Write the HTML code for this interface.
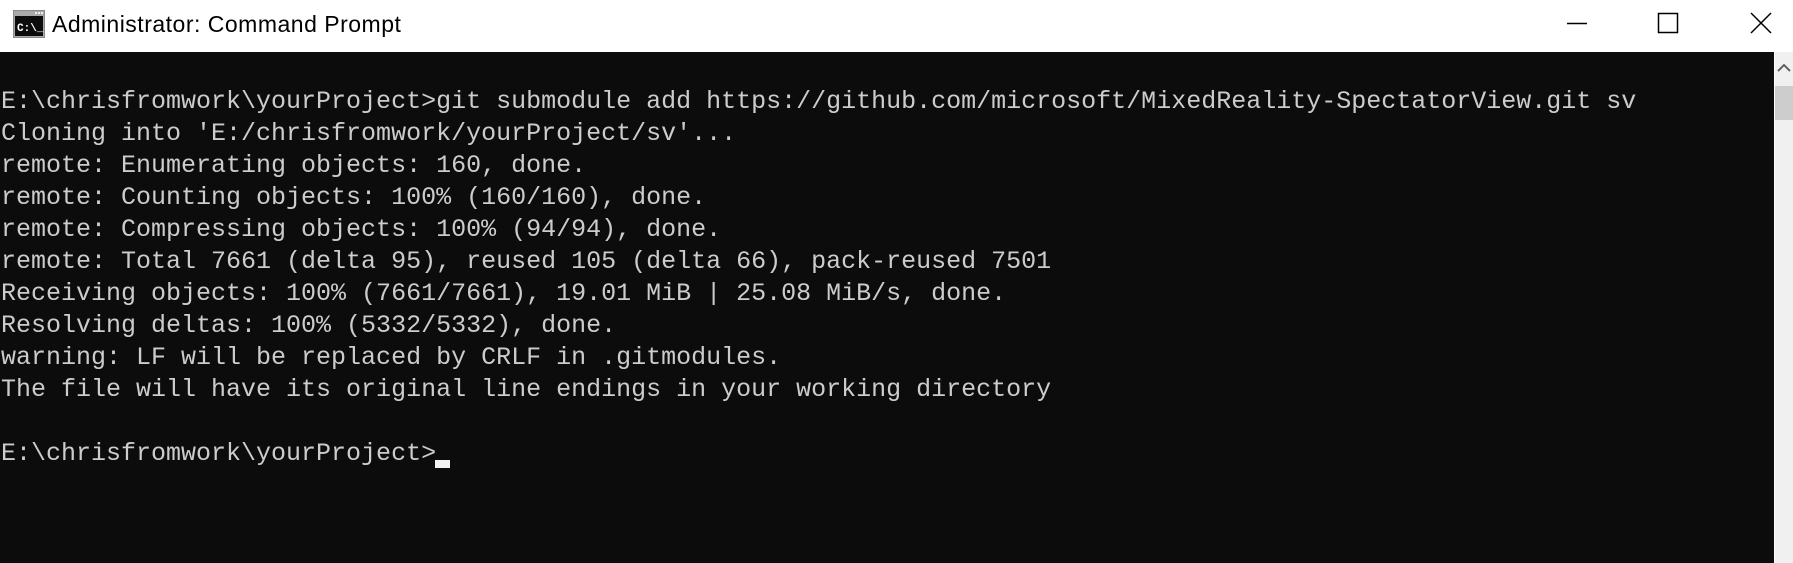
<!DOCTYPE html>
<html><head><meta charset="utf-8"><style>
html,body{margin:0;padding:0;width:1793px;height:563px;overflow:hidden;background:#fff}
#title{position:absolute;left:0;top:0;width:1793px;height:52px;background:#fff}
#title .t{position:absolute;left:52px;top:10px;font:23px "Liberation Sans",sans-serif;color:#000;line-height:28px;letter-spacing:0.5px}
#term{position:absolute;left:0;top:52px;width:1774px;height:511px;background:#0c0c0c}
pre{margin:0;position:absolute;left:1px;top:34px;font:25px/32px "Liberation Mono",monospace;color:#cccccc}
#cur{position:absolute;left:435px;top:408px;width:15px;height:8px;background:#f2f2f2}
#sb{position:absolute;left:1775px;top:52px;width:18px;height:511px;background:#f0f0f0}
#thumb{position:absolute;left:0;top:34px;width:18px;height:34px;background:#cdcdcd}
</style></head><body>
<div id="title">
<svg style="position:absolute;left:13px;top:10px" width="32" height="28" viewBox="0 0 32 28">
<rect x="0" y="0" width="32" height="28" fill="#8a8a8a"/>
<rect x="1" y="1" width="30" height="26" fill="#a9a9a9"/>
<rect x="22" y="2" width="2" height="2" fill="#eee"/><rect x="25" y="2" width="2" height="2" fill="#eee"/><rect x="28" y="2" width="2" height="2" fill="#eee"/>
<rect x="2" y="6" width="28" height="20" fill="#0c0c0c"/>
<text x="4" y="21" font-family="Liberation Mono,monospace" font-size="11" font-weight="bold" fill="#fff">C:\_</text>
</svg>
<div class="t">Administrator: Command Prompt</div>
<svg style="position:absolute;left:1560px;top:8px" width="230" height="32">
<line x1="7" y1="15.5" x2="27" y2="15.5" stroke="#000" stroke-width="1.5"/>
<rect x="98.5" y="5.5" width="19" height="19" fill="none" stroke="#000" stroke-width="1.5"/>
<path d="M191 5 L211 25 M211 5 L191 25" stroke="#000" stroke-width="1.5"/>
</svg>
</div>
<div id="term">
<pre>E:\chrisfromwork\yourProject>git submodule add https://github.com/microsoft/MixedReality-SpectatorView.git sv
Cloning into 'E:/chrisfromwork/yourProject/sv'...
remote: Enumerating objects: 160, done.
remote: Counting objects: 100% (160/160), done.
remote: Compressing objects: 100% (94/94), done.
remote: Total 7661 (delta 95), reused 105 (delta 66), pack-reused 7501
Receiving objects: 100% (7661/7661), 19.01 MiB | 25.08 MiB/s, done.
Resolving deltas: 100% (5332/5332), done.
warning: LF will be replaced by CRLF in .gitmodules.
The file will have its original line endings in your working directory

E:\chrisfromwork\yourProject></pre>
<div id="cur"></div>
</div>
<div id="sb">
<svg style="position:absolute;left:0;top:0" width="18" height="34"><path d="M3 19 L9 13 L15 19" fill="none" stroke="#606060" stroke-width="2"/></svg>
<div id="thumb"></div>
</div>
</body></html>
